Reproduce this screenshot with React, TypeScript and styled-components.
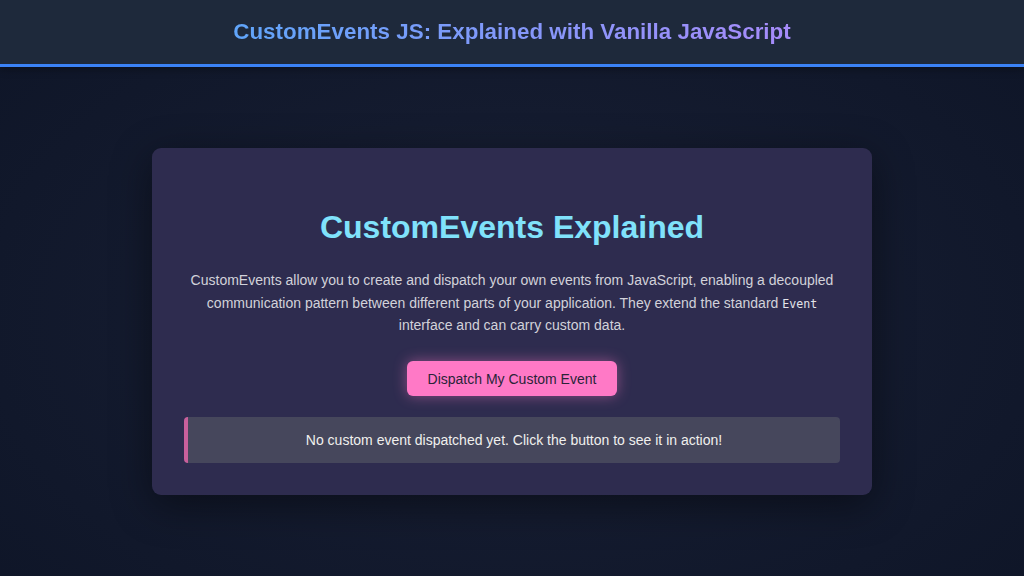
import React from "react";
import styled, { createGlobalStyle } from "styled-components";

const GlobalStyle = createGlobalStyle`
  html, body {
    margin: 0;
    padding: 0;
    height: 100%;
  }
  body {
    font-family: "Liberation Sans", Arial, sans-serif;
    background: #0f172a;
    color: #f8f8f2;
  }
  * { box-sizing: border-box; }
`;

const Page = styled.div`
  min-height: 100vh;
  display: flex;
  flex-direction: column;
  background: radial-gradient(ellipse at 50% 55%, #1b2338 0%, #141b2f 45%, #0e1527 100%);
`;

const Header = styled.header`
  height: 67px;
  display: flex;
  align-items: center;
  justify-content: center;
  background: #1e293b;
  border-bottom: 3px solid #3b82f6;
  box-shadow: 0 2px 8px rgba(0, 0, 0, 0.35);
`;

const HeaderTitle = styled.h1`
  margin: 0;
  font-size: 22.4px;
  font-weight: 700;
  background: linear-gradient(90deg, #60a5fa 0%, #a78bfa 100%);
  -webkit-background-clip: text;
  background-clip: text;
  color: transparent;
`;

const Main = styled.main`
  flex: 1;
  display: flex;
  align-items: center;
  justify-content: center;
`;

const Card = styled.section`
  width: 720px;
  padding: 32px;
  background: #2e2c4f;
  border-radius: 9px;
  box-shadow: 0 10px 40px rgba(0, 0, 0, 0.45);
  text-align: center;
`;

const Title = styled.h2`
  margin: 29px 0 23px;
  font-size: 32px;
  font-weight: 700;
  line-height: 37px;
  color: #80e2fb;
`;

const Intro = styled.p`
  margin: 0 0 24.5px;
  font-size: 14px;
  line-height: 22.5px;
  color: #d2d2da;
`;

const Code = styled.code`
  font-family: "DejaVu Sans Mono", "Liberation Mono", monospace;
  font-size: 11.6px;
  line-height: 1;
  color: #e4e4ea;
`;

const DispatchButton = styled.button`
  display: inline-block;
  height: 35px;
  padding: 0 20.5px;
  border: none;
  border-radius: 6px;
  background: #ff79c6;
  color: #2a2438;
  font-family: "Liberation Sans", Arial, sans-serif;
  font-size: 14px;
  cursor: pointer;
  box-shadow: 0 0 14px rgba(255, 121, 198, 0.45);
`;

const Status = styled.div`
  margin-top: 21px;
  height: 46px;
  display: flex;
  align-items: center;
  justify-content: center;
  background: #46475c;
  border-left: 4px solid #c8609c;
  border-radius: 4px;
  font-size: 14px;
  color: #f0f0ee;
`;

export default function App() {
  return (
    <>
      <GlobalStyle />
      <Page>
        <Header>
          <HeaderTitle>CustomEvents JS: Explained with Vanilla JavaScript</HeaderTitle>
        </Header>
        <Main>
          <Card>
            <Title>CustomEvents Explained</Title>
            <Intro>
              CustomEvents allow you to create and dispatch your own events from JavaScript, enabling a
              decoupled communication pattern between different parts of your application. They extend the
              standard <Code>Event</Code> interface and can carry custom data.
            </Intro>
            <DispatchButton type="button">Dispatch My Custom Event</DispatchButton>
            <Status>No custom event dispatched yet. Click the button to see it in action!</Status>
          </Card>
        </Main>
      </Page>
    </>
  );
}
